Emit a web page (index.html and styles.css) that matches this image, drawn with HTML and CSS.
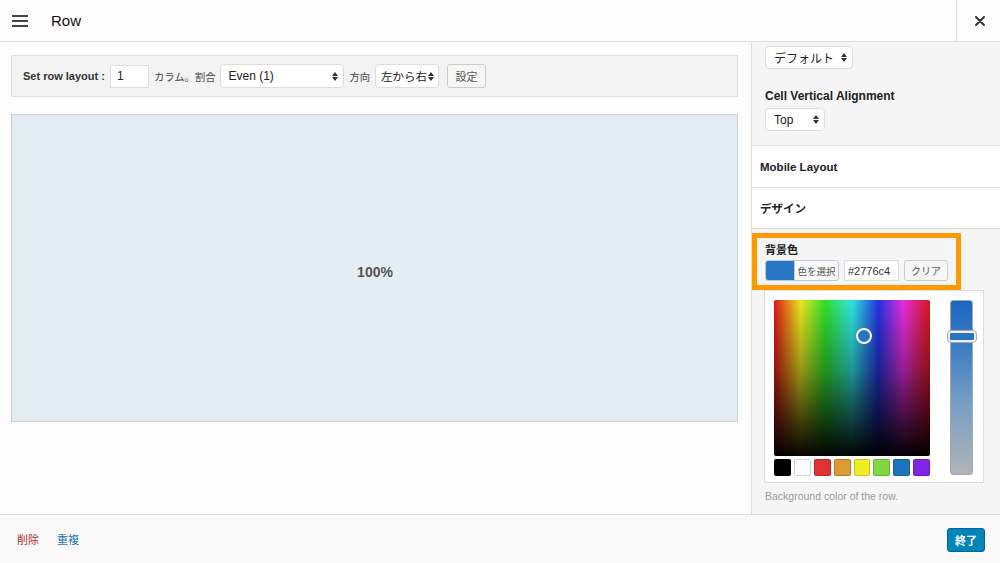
FILE: index.html
```html
<!DOCTYPE html>
<html lang="ja">
<head>
<meta charset="utf-8">
<title>Row</title>
<link rel="stylesheet" href="styles.css">
</head>
<body>
<div class="dialog">
  <header class="topbar">
    <div class="menu-btn">
      <svg width="16" height="12" viewBox="0 0 16 12"><rect x="0" y="0" width="16" height="2" fill="#444"/><rect x="0" y="5" width="16" height="2" fill="#444"/><rect x="0" y="10" width="16" height="2" fill="#444"/></svg>
    </div>
    <h1 class="title">Row</h1>
    <div class="close-btn">
      <svg width="10" height="10" viewBox="0 0 10 10"><path d="M1 1L9 9M9 1L1 9" stroke="#333" stroke-width="2" stroke-linecap="round"/></svg>
    </div>
  </header>
  <div class="body">
    <main class="left">
      <div class="toolbar">
        <span class="tb-label">Set row layout :</span>
        <input class="tb-input" value="1">
        <span class="tb-text">カラム。割合</span>
        <div class="select sel-even"><span>Even (1)</span><i class="arrows"></i></div>
        <span class="tb-text">方向</span>
        <div class="select sel-dir"><span>左から右</span><i class="arrows"></i></div>
        <button class="btn btn-set">設定</button>
      </div>
      <div class="preview"><span class="pct">100%</span></div>
    </main>
    <aside class="side">
      <div class="sec-top">
        <div class="select sel-def"><span>デフォルト</span><i class="arrows"></i></div>
        <div class="field-label">Cell Vertical Alignment</div>
        <div class="select sel-top"><span>Top</span><i class="arrows"></i></div>
      </div>
      <div class="sec-head">Mobile Layout</div>
      <div class="sec-head">デザイン</div>
      <div class="sec-design">
        <div class="highlight">
          <div class="bg-label">背景色</div>
          <div class="color-row">
            <div class="color-btn"><span class="chip"></span><span class="chip-text">色を選択</span></div>
            <input class="hex" value="#2776c4">
            <button class="btn btn-clear">クリア</button>
          </div>
        </div>
        <div class="picker">
          <div class="picker-left">
            <div class="square"><span class="marker"></span></div>
            <div class="swatches">
              <span class="sw" style="background:#000"></span>
              <span class="sw" style="background:#fff"></span>
              <span class="sw" style="background:#dd3333"></span>
              <span class="sw" style="background:#dd9933"></span>
              <span class="sw" style="background:#eeee22"></span>
              <span class="sw" style="background:#81d742"></span>
              <span class="sw" style="background:#1e73be"></span>
              <span class="sw" style="background:#8224e3"></span>
            </div>
          </div>
          <div class="slider"><span class="handle"></span></div>
        </div>
        <p class="desc">Background color of the row.</p>
      </div>
    </aside>
  </div>
  <footer class="foot">
    <a class="link del">削除</a>
    <a class="link dup">重複</a>
    <span class="spacer"></span>
    <button class="btn-done">終了</button>
  </footer>
</div>
</body>
</html>
```
FILE: styles.css
```css
* { box-sizing: border-box; }
html, body { margin: 0; padding: 0; }
body {
  font-family: "Liberation Sans", "Noto Sans CJK JP", sans-serif;
  font-size: 12px;
  color: #222;
  width: 1000px;
  height: 563px;
  overflow: hidden;
  background: #fdfdfd;
}
.dialog { display: flex; flex-direction: column; height: 563px; }

.topbar {
  height: 42px;
  flex: none;
  display: flex;
  align-items: center;
  background: #fcfcfc;
  border-bottom: 1px solid #dddddd;
}
.menu-btn { width: 40px; padding-left: 12px; display: flex; align-items: center; padding-top: 1px; }
.title { margin: 0 0 0 11px; font-size: 15px; font-weight: normal; color: #111; flex: 1; }
.close-btn {
  width: 44px; height: 41px;
  border-left: 1px solid #dddddd;
  display: flex; align-items: center; justify-content: center;
  padding-left: 2px;
}

.body { flex: 1; display: flex; min-height: 0; }
.left { width: 751px; flex: none; padding: 13px 13px 0 11px; background: #fdfdfd; }
.toolbar {
  height: 42px;
  background: #f3f3f3;
  border: 1px solid #dddddd;
  display: flex;
  align-items: center;
  padding-left: 11px;
  white-space: nowrap;
}
.tb-label { font-weight: bold; font-size: 11px; color: #333; width: 87px; flex: none; }
.tb-input {
  width: 39px; height: 23px;
  border: 1px solid #dddddd;
  background: #fff;
  font: 12px "Liberation Sans", sans-serif;
  padding: 0 6px;
  color: #222;
  margin-right: 5px;
  flex: none;
}
.tb-text { color: #444; margin-right: 5px; font-size: 10.3px; flex: none; }
.select {
  height: 24px;
  border: 1px solid #dddddd;
  border-radius: 4px;
  background: #fff;
  display: flex; align-items: center;
  padding: 0 5px 0 7px;
  color: #222;
  font-size: 12px;
  flex: none;
  white-space: nowrap;
}
.select span { flex: 1; }
.arrows {
  width: 6px; height: 9px; position: relative; flex: none;
}
.arrows::before, .arrows::after {
  content: ""; position: absolute; left: 0;
  border-left: 3px solid transparent; border-right: 3px solid transparent;
}
.arrows::before { top: 0; border-bottom: 4px solid #333; }
.arrows::after { bottom: 0; border-top: 4px solid #333; }
.sel-even { width: 124px; margin-right: 5px; }
.sel-dir { width: 64px; margin-right: 8px; padding: 0 4px 0 5px; font-size: 11.5px; }
.btn {
  height: 24px;
  border: 1px solid #cccccc;
  border-radius: 3px;
  background: #f6f6f6;
  font: 11px "Liberation Sans", "Noto Sans CJK JP", sans-serif;
  color: #555;
  padding: 0 8px;
  flex: none;
}
.btn-set { width: 39px; padding: 0; }

.preview {
  margin-top: 17px;
  height: 308px;
  background: #e3eef4;
  border: 1px solid #c2d0da;
  display: flex; align-items: center; justify-content: center;
}
.pct { font-size: 14px; font-weight: bold; color: #555; margin-left: 1px; margin-top: 8px; }

.side {
  flex: 1;
  background: #f5f5f5;
  border-left: 1px solid #dddddd;
  display: flex; flex-direction: column;
  overflow: hidden;
}
.sec-top { padding: 4px 0 14px 13px; border-bottom: 1px solid #dddddd; }
.sel-def { width: 88px; height: 23px; padding-left: 8px; }
.sel-top { width: 60px; height: 23px; padding-left: 8px; }
.field-label { font-weight: bold; margin: 20px 0 5px 0; color: #222; line-height: 14px; }
.sec-head {
  height: 42px;
  background: #fff;
  border-bottom: 1px solid #dddddd;
  display: flex; align-items: center;
  padding-left: 8px;
  font-weight: bold;
  font-size: 11.5px;
  color: #222;
}
.sec-head + .sec-head { height: 41px; }
.sec-design { padding-top: 4px; }
.highlight {
  width: 209px;
  border: 5px solid #ff9900;
  padding: 5px 0 4px 8px;
}
.bg-label { font-weight: bold; font-size: 11px; line-height: 14px; }
.color-row { display: flex; align-items: center; margin-top: 3px; }
.color-btn {
  display: flex; height: 21px;
  border: 1px solid #b8cbe0;
  border-radius: 3px;
  overflow: hidden;
  background: #fafafa;
  margin-right: 5px;
  width: 74px;
  flex: none;
}
.chip { width: 28px; background: #2776c4; flex: none; }
.chip-text { flex: 1; justify-content: center; font-size: 9.5px; color: #555; display: flex; align-items: center; border-left: 1px solid #ccc; white-space: nowrap; }
.hex {
  width: 55px; height: 21px;
  border: 1px solid #dddddd;
  background: #fff;
  font: 11px "Liberation Sans", sans-serif;
  padding: 0 3px;
  color: #333;
  margin-right: 5px;
  flex: none;
}
.btn-clear { height: 21px; width: 44px; padding: 0; font-size: 10px; }

.picker {
  margin-left: 12px;
  width: 220px;
  height: 193px;
  background: #fff;
  border: 1px solid #dddddd;
  display: flex;
  padding: 9px 10px 0 9px;
}
.picker-left { width: 156px; }
.square {
  width: 156px; height: 156px;
  border-radius: 2px;
  position: relative;
  background:
    linear-gradient(to bottom, rgba(0,0,0,0) 0%, rgba(0,0,0,0.35) 45%, rgba(0,0,0,0.98) 100%),
    linear-gradient(to right, #e0161a 0%, #ebe61e 17%, #2ee02a 33%, #2ee6e0 50%, #2432e0 67%, #e62ee0 83%, #d8161a 100%);
}
.marker {
  position: absolute; left: 82px; top: 28px;
  width: 16px; height: 16px;
  border: 2px solid #fff;
  border-radius: 50%;
  background: #2776c4;
}
.swatches { display: flex; gap: 3px; margin-top: 3px; }
.sw { width: 17px; height: 17px; border: 1px solid rgba(0,0,0,0.18); border-radius: 2px; }
.slider {
  margin-left: 20px;
  width: 24px; height: 175px;
  border-radius: 3px;
  background: linear-gradient(to bottom, #1a66c0 0%, #3a7bc4 25%, #7a9ec4 60%, #b0b4b8 100%);
  border: 1px solid #a0a8b0;
  position: relative;
}
.handle {
  position: absolute; left: -3px; top: 30px;
  width: 28px; height: 11px;
  border: 2px solid #eee;
  outline: 1px solid #aaa;
  border-radius: 3px;
  background: #2a72c2;
}
.desc { margin: 7px 0 0 13px; font-size: 10.5px; color: #999; }

.foot {
  height: 49px;
  flex: none;
  border-top: 1px solid #dddddd;
  background: #f9f9f9;
  display: flex; align-items: center;
  padding: 0 15px 0 17px;
}
.link { font-size: 11px; margin-right: 18px; }
.del { color: #b32d2e; }
.dup { color: #2a71b0; }
.spacer { flex: 1; }
.btn-done {
  width: 38px; height: 24px;
  background: #0085ba;
  border: 1px solid #006799;
  border-radius: 3px;
  color: #fff;
  font: bold 11px "Liberation Sans", "Noto Sans CJK JP", sans-serif;
  padding: 0;
  margin-top: 1px;
}
```
